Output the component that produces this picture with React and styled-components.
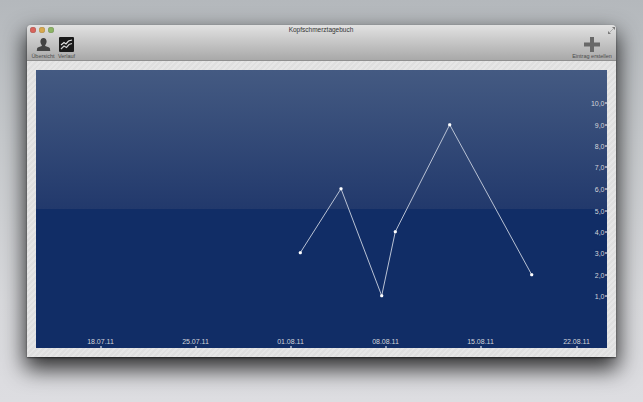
import React from 'react';
import styled, { createGlobalStyle } from 'styled-components';

const GlobalStyle = createGlobalStyle`
  html, body {
    margin: 0;
    padding: 0;
    height: 402px;
    overflow: hidden;
    font-family: "Liberation Sans", Arial, sans-serif;
  }
`;

const Desktop = styled.div`
  box-sizing: border-box;
  width: 643px;
  height: 402px;
  padding: 25px 27px 45px;
  background: linear-gradient(to bottom, #b4b8bc 0%, #c6c9cc 35%, #d8d9dc 75%, #dddde1 100%);
`;

const Window = styled.div`
  display: flex;
  flex-direction: column;
  height: 332px;
  border-radius: 4px 4px 0 0;
  overflow: hidden;
  box-shadow: 0 10px 22px 2px rgba(0, 0, 0, 0.8), 0 1px 2px rgba(0, 0, 0, 0.5);
`;

const TitleBar = styled.div`
  box-sizing: border-box;
  display: flex;
  flex-direction: column;
  flex: none;
  height: 36px;
  padding: 0 1px 0 3px;
  background: linear-gradient(to bottom, #e2e2e2 0%, #cbcbcb 40%, #a9a9a9 100%);
  border-bottom: 1px solid #8f8f8f;
`;

const TopRow = styled.div`
  display: flex;
  align-items: center;
  flex: none;
  height: 10px;
`;

const Lights = styled.div`
  display: flex;
  justify-content: ${p => (p.$end ? 'flex-end' : 'flex-start')};
  gap: 3px;
  width: 60px;
`;

const Light = styled.span`
  width: 6px;
  height: 6px;
  border-radius: 50%;
  background: ${p => p.color};
  box-shadow: inset 0 0 1px rgba(0, 0, 0, 0.5);
`;

const Title = styled.div`
  flex: 1;
  padding-right: 3px;
  text-align: center;
  font-size: 6.5px;
  line-height: 10px;
  color: #333;
  opacity: 0.99;
`;

const Tools = styled.div`
  display: flex;
  justify-content: space-between;
  align-items: flex-start;
  padding: 2px 3px 0 1px;
`;

const ToolGroup = styled.div`
  display: flex;
  gap: 2px;
`;

const Tool = styled.div`
  display: flex;
  flex-direction: column;
  align-items: center;
  width: ${p => p.$width}px;
`;

const ToolLabel = styled.div`
  font-size: 5.5px;
  line-height: 7px;
  margin-top: 1px;
  white-space: nowrap;
  color: #4c4c4c;
  opacity: 0.99;
`;

const Content = styled.div`
  flex: 1;
  display: flex;
  padding: 9px;
  background: repeating-linear-gradient(135deg, #e6e6e6 0 2px, #dfdfdf 2px 4px);
`;

const Chart = styled.svg`
  display: block;
  width: 571px;
  height: 278px;
`;

const AxisText = styled.text`
  font-size: 7px;
  fill: #d6d8dc;
  opacity: 0.99;
  font-family: "Liberation Sans", Arial, sans-serif;
`;

const OFFSET_X = 36;
const OFFSET_Y = 70;

const points = [
  [300.3, 252.7],
  [341, 188.7],
  [381.7, 295.7],
  [395.3, 231.7],
  [449.7, 124.7],
  [531.7, 274.7]
].map(([x, y]) => [x - OFFSET_X, y - OFFSET_Y]);

const yTicks = [
  ['10,0', 103],
  ['9,0', 125],
  ['8,0', 146],
  ['7,0', 167],
  ['6,0', 189],
  ['5,0', 211],
  ['4,0', 232],
  ['3,0', 253],
  ['2,0', 275],
  ['1,0', 296]
];

const xTicks = [
  ['18.07.11', 101],
  ['25.07.11', 196],
  ['01.08.11', 291],
  ['08.08.11', 386],
  ['15.08.11', 481],
  ['22.08.11', 577]
];

const PersonIcon = () => (
  <svg width="15" height="15" viewBox="0 0 16 16">
    <path
      d="M8 1c2.200 0 3.300 1.700 3.300 3.700 0 1.600-.7 3-1.500 3.800v1c1.800.6 4.400 1.200 5 2.600l.4 2.900H.8l.4-2.900c.6-1.400 3.200-2 5-2.600v-1C5.400 7.700 4.700 6.300 4.700 4.700 4.700 2.700 5.800 1 8 1z"
      fill="#444"
    />
  </svg>
);

const TrendIcon = () => (
  <svg width="15" height="15" viewBox="0 0 15 15">
    <rect width="15" height="15" rx="1" fill="#1a1a1a" />
    <path d="M2 8l3-2.500 2 1.500 2.500-3L13 3" fill="none" stroke="#e4e4e4" strokeWidth="1.200" />
    <path d="M2 12l3-3 2.500 1.500 2.500-3L13 6.500" fill="none" stroke="#cfcfcf" strokeWidth="1.200" />
  </svg>
);

const PlusIcon = () => (
  <svg width="16" height="15" viewBox="0 0 16 15">
    <path d="M6 0h4v5.500h6v4h-6V15H6V9.500H0v-4h6z" fill="#686868" />
  </svg>
);

const ResizeIcon = () => (
  <svg width="7" height="7" viewBox="0 0 7 7">
    <path d="M4 0h3v3zM0 4v3h3z" fill="#7a7a7a" />
    <path d="M1.500 5.500l4-4" stroke="#9a9a9a" strokeWidth="0.7" />
  </svg>
);

const App = () => (
  <>
    <GlobalStyle />
    <Desktop>
      <Window>
        <TitleBar>
          <TopRow>
            <Lights>
              <Light color="#d8645c" />
              <Light color="#d9aa4f" />
              <Light color="#8db566" />
            </Lights>
            <Title>Kopfschmerztagebuch</Title>
            <Lights $end>
              <ResizeIcon />
            </Lights>
          </TopRow>
          <Tools>
            <ToolGroup>
              <Tool $width={24}>
                <PersonIcon />
                <ToolLabel>Übersicht</ToolLabel>
              </Tool>
              <Tool $width={19}>
                <TrendIcon />
                <ToolLabel>Verlauf</ToolLabel>
              </Tool>
            </ToolGroup>
            <Tool $width={40}>
              <PlusIcon />
              <ToolLabel>Eintrag erstellen</ToolLabel>
            </Tool>
          </Tools>
        </TitleBar>
        <Content>
          <Chart viewBox="0 0 571 278">
            <defs>
              <linearGradient id="band" x1="0" y1="0" x2="0" y2="1">
                <stop offset="0" stopColor="#445a82" />
                <stop offset="1" stopColor="#22396c" />
              </linearGradient>
            </defs>
            <rect width="571" height="139" fill="url(#band)" />
            <rect y="139" width="571" height="139" fill="#112d66" />
            <polyline
              points={points.map(p => p.join(',')).join(' ')}
              fill="none"
              stroke="#b9c2d4"
              strokeWidth="1"
            />
            {points.map(([x, y]) => (
              <rect key={x} x={x - 1.5} y={y - 1.5} width="3" height="3" rx="1" fill="#fff" />
            ))}
            {yTicks.map(([label, y]) => (
              <g key={label}>
                <AxisText x="568.500" y={y - OFFSET_Y + 2.500} textAnchor="end">{label}</AxisText>
                <rect x="569" y={y - OFFSET_Y - 0.500} width="2" height="1" fill="#fff" />
              </g>
            ))}
            {xTicks.map(([label, x]) => (
              <g key={label}>
                <AxisText x={x - OFFSET_X - 0.500} y="273.500" textAnchor="middle">{label}</AxisText>
                <rect x={x - OFFSET_X - 0.500} y="276" width="1" height="2" fill="#fff" />
              </g>
            ))}
          </Chart>
        </Content>
      </Window>
    </Desktop>
  </>
);

export default App;
